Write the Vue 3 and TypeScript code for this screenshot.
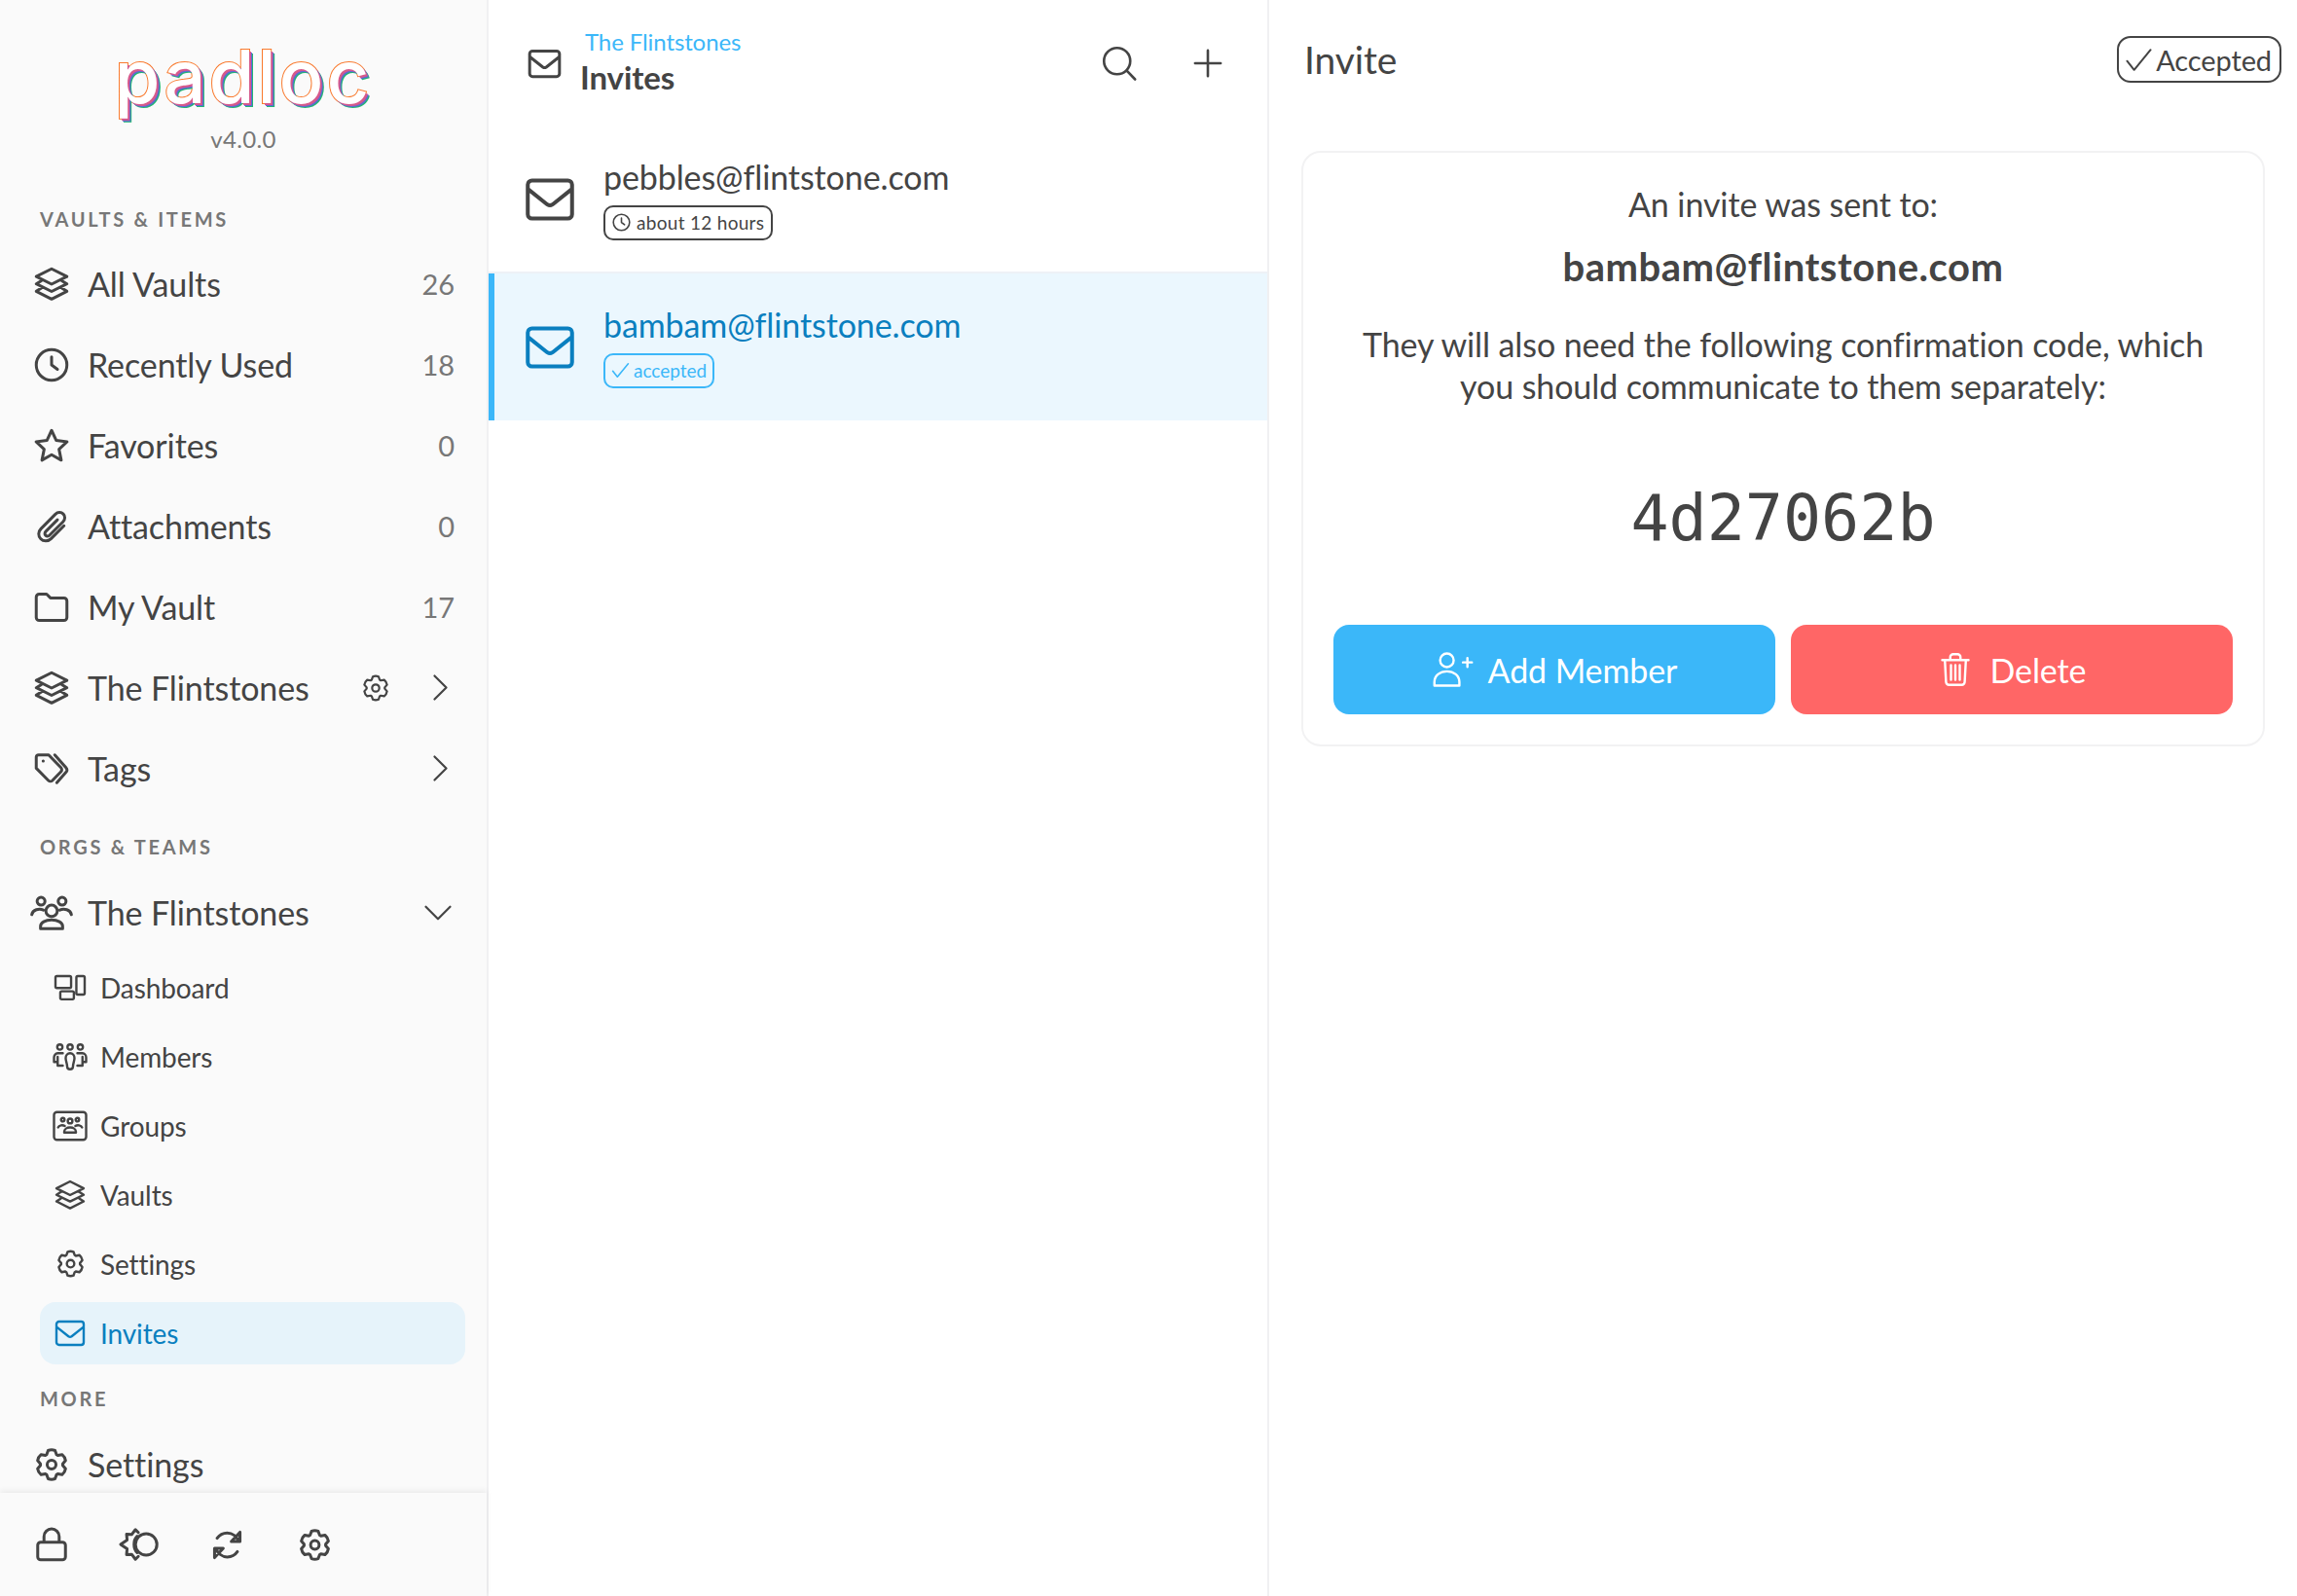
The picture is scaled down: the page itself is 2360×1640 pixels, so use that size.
<script setup lang="ts">
// six tooth cog, shared by every settings icon
function cog(): string {
  const pts: string[] = []
  for (let i = 0; i < 6; i++) {
    const a = (i * Math.PI) / 3 - Math.PI / 2
    const at = (r: number, off: number) =>
      `${(12 + r * Math.cos(a + off)).toFixed(2)} ${(12 + r * Math.sin(a + off)).toFixed(2)}`
    pts.push(`${i === 0 ? 'M' : 'L'}${at(8.6, -0.46)}L${at(11.2, -0.24)}Q${at(11.9, 0)} ${at(11.2, 0.24)}L${at(8.6, 0.46)}`)
  }
  return pts.join('') + 'ZM12 8.6a3.4 3.4 0 1 0 0 6.8a3.4 3.4 0 1 0 0-6.8Z'
}

const icons: Record<string, string> = {
  layers: 'M12 1.5L22.5 6.8L12 12L1.5 6.8ZM5 9.6L1.5 11.8L12 17L22.5 11.8L19 9.6M5 14.6L1.5 16.9L12 22.2L22.5 16.9L19 14.6',
  clock: 'M12 1.5a10.5 10.5 0 1 0 0 21a10.5 10.5 0 1 0 0-21ZM12 6.5V12L16 15',
  star: 'M12 1.5L15.2 8.4L22.6 9.3L17.1 14.4L18.6 21.9L12 18.2L5.4 21.9L6.9 14.4L1.4 9.3L8.8 8.4Z',
  clip: 'M20.5 11.5L11.6 20.4C9.6 22.4 6.4 22.4 4.6 20.5C2.7 18.6 2.7 15.6 4.7 13.6L14.6 3.6C16.2 2 18.6 2 20 3.4C21.4 4.8 21.4 7.2 19.8 8.8L10.6 18C9.8 18.8 8.6 18.8 7.9 18.1C7.2 17.4 7.2 16.2 8 15.4L16 7.4',
  folder: 'M1.5 5A2 2 0 0 1 3.5 3H8.6L11.2 5.6H20.5A2 2 0 0 1 22.5 7.6V19A2 2 0 0 1 20.5 21H3.5A2 2 0 0 1 1.5 19Z',
  tags: 'M3 2.5H10L18.4 11.2A2 2 0 0 1 18.4 14L12.6 20A2 2 0 0 1 9.8 20L1.5 11.6V4A1.5 1.5 0 0 1 3 2.5ZM6.2 6.6h.1M14.2 2.5L22 11.4A2 2 0 0 1 22 14.2L15.6 21.5',
  right: 'M7 2L17 12L7 22',
  down: 'M2 7L12 17L22 7',
  users: 'M6.1 3.3a2.2 2.2 0 1 0 0 4.4a2.2 2.2 0 1 0 0-4.4ZM17.9 3.3a2.2 2.2 0 1 0 0 4.4a2.2 2.2 0 1 0 0-4.4ZM12 7.7a3.2 3.2 0 1 0 0 6.4a3.2 3.2 0 1 0 0-6.4ZM.9 13C1.5 10.2 5 9.3 7.4 10.4M23.1 13C22.5 10.2 19 9.3 16.6 10.4M5.8 20.8V19.6C5.8 17.4 8.5 16 12 16S18.2 17.4 18.2 19.6V20.8Z',
  dashboard: 'M3 4H11.7a1 1 0 0 1 1 1V11.2a1 1 0 0 1-1 1H3a1 1 0 0 1-1-1V5a1 1 0 0 1 1-1ZM6.3 14.4H13.6a1 1 0 0 1 1 1V18.9a1 1 0 0 1-1 1H6.3a1 1 0 0 1-1-1V15.4a1 1 0 0 1 1-1ZM17.3 4H21a1 1 0 0 1 1 1V15.7a1 1 0 0 1-1 1H17.3a1 1 0 0 1-1-1V5a1 1 0 0 1 1-1Z',
  members: 'M5 3.5a1.8 1.8 0 1 0 0 3.6a1.8 1.8 0 1 0 0-3.6ZM12 3.5a1.8 1.8 0 1 0 0 3.6a1.8 1.8 0 1 0 0-3.6ZM19 3.5a1.8 1.8 0 1 0 0 3.6a1.8 1.8 0 1 0 0-3.6ZM7 9.5H3.5C2 9.5 1 11 1 12.5V15.5H3M3.5 12V18H7M17 9.5H20.5C22 9.5 23 11 23 12.5V15.5H21M20.5 12V18H17M12 9.5C10.2 9.5 9 11 9 12.8C9 15 10 16.5 10 18.5C10 20 11 20.5 12 20.5S14 20 14 18.5C14 16.5 15 15 15 12.8C15 11 13.8 9.5 12 9.5Z',
  groups: 'M3 2.5H21A2 2 0 0 1 23 4.5V19.5A2 2 0 0 1 21 21.5H3A2 2 0 0 1 1 19.5V4.5A2 2 0 0 1 3 2.5ZM7 6.5a1.2 1.2 0 1 0 0 2.4a1.2 1.2 0 1 0 0-2.4ZM17 6.5a1.2 1.2 0 1 0 0 2.4a1.2 1.2 0 1 0 0-2.4ZM12 7a1.6 1.6 0 1 0 0 3.2a1.6 1.6 0 1 0 0-3.2ZM3.8 13C4.5 11.4 7 11.2 8.4 12M20.2 13C19.5 11.4 17 11.2 15.6 12M8 16.5V16C8 14 10 13 12 13S16 14 16 16V16.5Z',
  mail: 'M3.5 3H20.5A2 2 0 0 1 22.5 5V19A2 2 0 0 1 20.5 21H3.5A2 2 0 0 1 1.5 19V5A2 2 0 0 1 3.5 3ZM1.5 7L10.8 14.4Q12 15.2 13.2 14.4L22.5 7',
  lock: 'M4.5 10.5H19.5A2 2 0 0 1 21.5 12.5V20.5A2 2 0 0 1 19.5 22.5H4.5A2 2 0 0 1 2.5 20.5V12.5A2 2 0 0 1 4.5 10.5ZM6.8 10.5V6.6A5.2 5.2 0 0 1 17.2 6.6V10.5',
  theme: 'M16.1 5.7a6.3 6.3 0 1 0 0 12.6a6.3 6.3 0 1 0 0-12.6ZM11.5 5L9.8 3.3L7.6 6.2L4.6 6L4.9 9.4L1.1 12L4.9 14.6L4.6 18L7.6 17.8L9.8 20.7L11.5 19M10.8 7.2C8.4 9.5 8.4 14.5 10.8 16.8',
  sync: 'M20.5 9.5C19.2 5.6 15.8 3 12 3C9 3 6.2 4.4 4.4 7M3.5 14.5C4.8 18.4 8.2 21 12 21C15 21 17.8 19.6 19.6 17M21.5 2.5V9.5H15ZM2.5 21.5V14.5H9Z',
  search: 'M10.5 1.5a9 9 0 1 0 0 18a9 9 0 1 0 0-18ZM16.8 16.8L22.8 23',
  plus: 'M12 1.5V22.5M1.5 12H22.5',
  check: 'M2 13L8 20.5L22 3.5',
  adduser: 'M8.5 3a3.8 3.8 0 1 0 0 7.6a3.8 3.8 0 1 0 0-7.6ZM1.5 21V19C1.5 15.5 4.5 13 8.5 13S15.5 15.5 15.5 19V21ZM20 5.5V10.5M17.5 8H22.5',
  trash: 'M3 5.5H21M8.5 5.5V3.5A2 2 0 0 1 10.5 1.5H13.5A2 2 0 0 1 15.5 3.5V5.5M4.8 5.5L5.6 20.5A2 2 0 0 0 7.6 22.5H16.4A2 2 0 0 0 18.4 20.5L19.2 5.5M9 9V19M12 9V19M15 9V19',
  cog: cog(),
}

interface NavItem {
  label: string
  icon: string
  count?: number
  gear?: boolean
  chevron?: boolean
}

const vaultItems: NavItem[] = [
  { label: 'All Vaults', icon: 'layers', count: 26 },
  { label: 'Recently Used', icon: 'clock', count: 18 },
  { label: 'Favorites', icon: 'star', count: 0 },
  { label: 'Attachments', icon: 'clip', count: 0 },
  { label: 'My Vault', icon: 'folder', count: 17 },
  { label: 'The Flintstones', icon: 'layers', gear: true, chevron: true },
  { label: 'Tags', icon: 'tags', chevron: true },
]

const orgItems = [
  { label: 'Dashboard', icon: 'dashboard' },
  { label: 'Members', icon: 'members' },
  { label: 'Groups', icon: 'groups' },
  { label: 'Vaults', icon: 'layers' },
  { label: 'Settings', icon: 'cog' },
  { label: 'Invites', icon: 'mail', active: true },
]

const footerIcons = ['lock', 'theme', 'sync', 'cog']
</script>

<template>
  <div class="app">
    <aside class="sidebar">
      <div class="side-scroll">
        <div class="brand">
          <div class="logo">padloc</div>
          <div class="version">v4.0.0</div>
        </div>

        <div class="section-label">Vaults &amp; Items</div>
        <div v-for="item in vaultItems" :key="item.label + item.icon" class="nav-row">
          <svg class="icon nav-icon" viewBox="0 0 24 24"><path :d="icons[item.icon]" /></svg>
          <span class="nav-label">{{ item.label }}</span>
          <svg v-if="item.gear" class="icon gear-icon" viewBox="0 0 24 24"><path :d="icons.cog" /></svg>
          <svg v-if="item.chevron" class="icon chevron" viewBox="0 0 24 24"><path :d="icons.right" /></svg>
          <span v-if="item.count !== undefined" class="count">{{ item.count }}</span>
        </div>

        <div class="section-label orgs">Orgs &amp; Teams</div>
        <div class="nav-row">
          <svg class="icon nav-icon users" viewBox="0 0 24 24"><path :d="icons.users" /></svg>
          <span class="nav-label">The Flintstones</span>
          <svg class="icon chevron-down" viewBox="0 0 24 24"><path :d="icons.down" /></svg>
        </div>
        <div v-for="item in orgItems" :key="item.label" class="sub-row" :class="{ active: item.active }">
          <div class="sub-inner">
            <span class="sub-slot">
              <svg class="icon sub-icon" :class="'sub-' + item.icon" viewBox="0 0 24 24"><path :d="icons[item.icon]" /></svg>
            </span>
            <span>{{ item.label }}</span>
          </div>
        </div>

        <div class="section-label more">More</div>
        <div class="nav-row">
          <svg class="icon nav-icon nav-cog" viewBox="0 0 24 24"><path :d="icons.cog" /></svg>
          <span class="nav-label">Settings</span>
        </div>
      </div>

      <div class="side-footer">
        <div v-for="name in footerIcons" :key="name" class="foot-btn">
          <svg class="icon" :class="'foot-' + name" viewBox="0 0 24 24"><path :d="icons[name]" /></svg>
        </div>
      </div>
    </aside>

    <section class="list-pane">
      <header class="list-header">
        <svg class="icon head-mail" viewBox="0 0 24 24"><path :d="icons.mail" /></svg>
        <div class="head-titles">
          <div class="head-org">The Flintstones</div>
          <div class="head-title">Invites</div>
        </div>
        <svg class="icon head-btn search" viewBox="0 0 24 24"><path :d="icons.search" /></svg>
        <svg class="icon head-btn add" viewBox="0 0 24 24"><path :d="icons.plus" /></svg>
      </header>

      <div class="invite-row">
        <svg class="icon row-mail" viewBox="0 0 24 24"><path :d="icons.mail" /></svg>
        <div>
          <div class="row-email">pebbles@flintstone.com</div>
          <div class="tag">
            <svg class="icon tag-icon" viewBox="0 0 24 24"><path :d="icons.clock" /></svg>
            about 12 hours
          </div>
        </div>
      </div>

      <div class="invite-row selected">
        <svg class="icon row-mail" viewBox="0 0 24 24"><path :d="icons.mail" /></svg>
        <div>
          <div class="row-email">bambam@flintstone.com</div>
          <div class="tag">
            <svg class="icon tag-icon" viewBox="0 0 24 24"><path :d="icons.check" /></svg>
            accepted
          </div>
        </div>
      </div>
    </section>

    <main class="detail">
      <header class="detail-header">
        <h1 class="detail-title">Invite</h1>
        <div class="status">
          <svg class="icon status-icon" viewBox="0 0 24 24"><path :d="icons.check" /></svg>
          Accepted
        </div>
      </header>

      <div class="card">
        <p class="sent">An invite was sent to:</p>
        <p class="email">bambam@flintstone.com</p>
        <p class="note">They will also need the following confirmation code, which you should communicate to them separately:</p>
        <div class="code">4d27062b</div>
        <div class="actions">
          <button class="btn primary">
            <svg class="icon btn-icon" viewBox="0 0 24 24"><path :d="icons.adduser" /></svg>
            Add Member
          </button>
          <button class="btn danger">
            <svg class="icon btn-icon" viewBox="0 0 24 24"><path :d="icons.trash" /></svg>
            Delete
          </button>
        </div>
      </div>
    </main>
  </div>
</template>

<style scoped>
.app {
  display: flex;
  height: 100vh;
  overflow: hidden;
  background: #fff;
  color: #444;
  font-family: "Lato", "Noto Sans", sans-serif;
  font-size: 34px;
  letter-spacing: -0.1px;
}

.icon {
  display: block;
  flex: none;
  overflow: visible;
  fill: none;
  stroke: currentColor;
  stroke-linecap: round;
  stroke-linejoin: round;
}

.icon path {
  vector-effect: non-scaling-stroke;
  stroke-width: 3px;
}

/* sidebar */
.sidebar {
  width: 500px;
  flex: none;
  display: flex;
  flex-direction: column;
  background: #fafafa;
  border-right: 2px solid #f0f0f2;
}

.side-scroll {
  flex: 1;
  min-height: 0;
  overflow: hidden;
}

.brand {
  height: 205px;
  box-sizing: border-box;
  padding-top: 30px;
  text-align: center;
}

.logo {
  height: 96px;
  line-height: 96px;
  font-family: "Inter", sans-serif;
  font-size: 76px;
  font-weight: 500;
  letter-spacing: 3px;
  color: #fff;
  -webkit-text-stroke: 2px #f97a2e;
  paint-order: stroke fill;
  text-shadow: 2px 2px 0 #d65a8c, 3px 3px 0 #5d67d8, 4px 4px 0 #23b574;
}

.version {
  margin-top: 2px;
  font-size: 24px;
  line-height: 30px;
  letter-spacing: 0.3px;
  color: #777;
}

.section-label {
  height: 40px;
  line-height: 40px;
  margin: 0 0 5px 41px;
  font-size: 20px;
  font-weight: 700;
  letter-spacing: 2.7px;
  text-transform: uppercase;
  color: #777;
}

.section-label.orgs {
  margin-top: 19px;
  margin-bottom: 6px;
}

.section-label.more {
  margin-top: 12px;
  margin-bottom: 6px;
}

.nav-row {
  height: 83px;
  display: flex;
  align-items: center;
  padding: 0 33px 0 35px;
}

.nav-icon {
  width: 36px;
  height: 36px;
}

.nav-icon.nav-cog {
  width: 32px;
  height: 32px;
  margin: 0 2px;
}

.nav-icon.users {
  width: 44px;
  height: 44px;
  margin-left: -4px;
  margin-right: -4px;
}

.nav-label {
  margin-left: 19px;
  flex: 1;
}

.count {
  color: #777;
  font-size: 29px;
}

.gear-icon {
  width: 26px;
  height: 26px;
  margin-right: 39px;
}

.gear-icon path,
.chevron path,
.chevron-down path {
  stroke-width: 2.2px;
}

.chevron {
  width: 29px;
  height: 29px;
}

.chevron-down {
  width: 30px;
  height: 30px;
  margin-right: 2px;
}

.sub-row {
  height: 71px;
  display: flex;
  align-items: center;
  padding-left: 41px;
  padding-right: 22px;
  font-size: 28px;
}

.sub-inner {
  flex: 1;
  height: 64px;
  display: flex;
  align-items: center;
  padding-left: 13px;
  border-radius: 16px;
}

.sub-slot {
  width: 36px;
  height: 36px;
  margin-right: 13px;
  display: flex;
  align-items: center;
  justify-content: center;
}

.sub-icon {
  width: 36px;
  height: 36px;
}

.sub-icon.sub-cog {
  width: 27px;
  height: 27px;
}

.sub-icon.sub-layers {
  width: 32px;
  height: 32px;
}

.sub-icon.sub-mail {
  width: 32px;
  height: 32px;
}

.sub-icon path {
  stroke-width: 2.4px;
}

.sub-row.active .sub-inner {
  background: #e6f3fa;
  color: #0a7fbf;
}

.side-footer {
  height: 106px;
  flex: none;
  display: flex;
  align-items: center;
  padding-left: 8px;
  background: #fafafa;
  box-shadow: 0 -2px 6px rgba(0, 0, 0, 0.07);
}

.foot-btn {
  width: 90px;
  height: 44px;
  display: flex;
  align-items: center;
  justify-content: center;
}

.foot-lock {
  width: 36px;
  height: 36px;
}

.foot-theme {
  width: 42px;
  height: 42px;
}

.foot-sync {
  width: 33px;
  height: 33px;
}

.foot-cog {
  width: 31px;
  height: 31px;
}

/* list */
.list-pane {
  width: 800px;
  flex: none;
  border-right: 2px solid #f0f0f2;
}

.list-header {
  height: 130px;
  display: flex;
  align-items: center;
  padding: 0 46px 0 40px;
}

.head-mail {
  width: 35px;
  height: 35px;
}

.head-titles {
  flex: 1;
  margin-left: 19px;
  margin-top: -2px;
}

.head-org {
  margin-left: 5px;
  font-size: 24px;
  line-height: 30px;
  color: #3bb7f9;
}

.head-title {
  font-size: 33px;
  line-height: 42px;
  font-weight: 700;
}

.head-btn {
  width: 36px;
  height: 36px;
}

.head-btn path {
  stroke-width: 2.6px;
}

.head-btn.search {
  margin-right: 58px;
}

.head-btn.add {
  width: 30px;
  height: 30px;
}

.invite-row {
  height: 149px;
  display: flex;
  align-items: center;
  padding-left: 37px;
  border-bottom: 2px solid #eef1f6;
}

.row-mail {
  width: 52px;
  height: 52px;
  margin-right: 29px;
}

.row-mail path {
  stroke-width: 4px;
}

.row-email {
  line-height: 44px;
  font-size: 34px;
  margin-top: -2px;
}

.tag {
  display: inline-flex;
  align-items: center;
  gap: 6px;
  height: 36px;
  box-sizing: border-box;
  margin-top: 5px;
  padding: 0 7px;
  border: 2px solid #444;
  border-radius: 10px;
  font-size: 19px;
  letter-spacing: 0.3px;
}

.tag-icon {
  width: 19px;
  height: 19px;
}

.tag-icon path {
  stroke-width: 1.6px;
}

.invite-row.selected {
  height: 151px;
  padding-left: 31px;
  border-bottom: 0;
  border-left: 6px solid #3bb7f9;
  background: #ebf7fe;
  color: #0a7fbf;
}

.invite-row.selected .tag {
  gap: 4px;
  padding: 0 6px;
  border-color: #3bb7f9;
  color: #3bb7f9;
  letter-spacing: 0;
}

/* detail */
.detail {
  flex: 1;
  min-width: 0;
  padding: 0 33px;
}

.detail-header {
  height: 122px;
  display: flex;
  align-items: center;
  justify-content: space-between;
  padding-left: 3px;
  margin-right: -17px;
}

.detail-title {
  margin: 0;
  font-size: 39px;
  font-weight: 400;
}

.status {
  display: flex;
  align-items: center;
  gap: 3px;
  height: 48px;
  box-sizing: border-box;
  padding: 0 8px 0 6px;
  border: 2px solid #444;
  border-radius: 14px;
  font-size: 29px;
}

.status-icon {
  width: 29px;
  height: 29px;
}

.status-icon path {
  stroke-width: 2px;
}

.card {
  margin-top: 33px;
  padding: 31px 31px;
  border: 2px solid #f2f2f3;
  border-radius: 20px;
  text-align: center;
}

.card p {
  margin: 0;
}

.sent {
  line-height: 43px;
}

.email {
  margin-top: 19px !important;
  line-height: 48px;
  font-size: 40px;
  font-weight: 700;
  letter-spacing: 0.5px;
}

.note {
  margin-top: 34px !important;
  line-height: 43px;
}

.code {
  margin-top: 66px;
  height: 98px;
  line-height: 98px;
  font-family: "DejaVu Sans Mono", monospace;
  font-size: 65px;
  letter-spacing: 0;
}

.actions {
  margin-top: 60px;
  display: grid;
  grid-template-columns: 1fr 1fr;
  gap: 16px;
}

.btn {
  height: 92px;
  display: flex;
  align-items: center;
  justify-content: center;
  gap: 14px;
  border: 0;
  border-radius: 16px;
  color: #fff;
  font: inherit;
  letter-spacing: inherit;
}

.btn-icon {
  width: 36px;
  height: 36px;
}

.btn-icon path {
  stroke-width: 2.4px;
}

.primary {
  background: #3bb7f9;
}

.primary .btn-icon {
  width: 44px;
  height: 44px;
}

.danger {
  gap: 18px;
  background: #ff6666;
}
</style>

<style>
html,
body {
  margin: 0;
  background: #fff;
}
</style>
